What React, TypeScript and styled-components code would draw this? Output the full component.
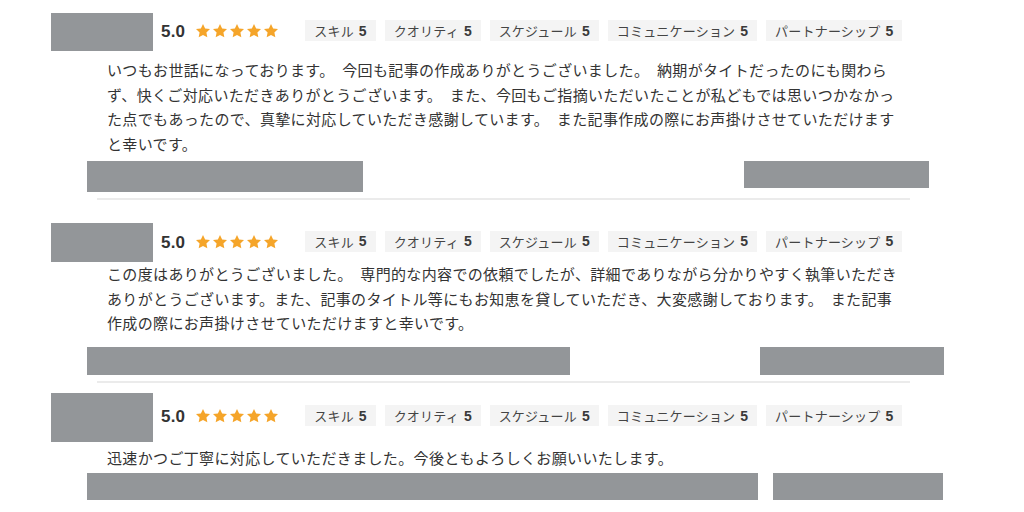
import React from 'react';
import styled, { createGlobalStyle } from 'styled-components';

const GlobalStyle = createGlobalStyle`
  html, body {
    margin: 0;
    padding: 0;
    background: #fff;
  }
  body {
    font-family: "Noto Sans CJK JP", "Noto Sans", sans-serif;
    color: #333;
  }
`;

const Page = styled.div`
  width: 1024px;
  height: 512px;
  overflow: hidden;
  padding-left: 51px;
  box-sizing: border-box;
`;

const Review = styled.section<{ $top: number }>`
  padding-top: ${({ $top }) => $top}px;
`;

const Header = styled.div`
  display: flex;
  align-items: center;
`;

const Avatar = styled.div<{ $h: number }>`
  width: 102px;
  height: ${({ $h }) => $h}px;
  background: #939699;
  flex-shrink: 0;
`;

const Score = styled.span`
  margin-left: 8px;
  font-family: "Liberation Sans", Arial, sans-serif;
  font-weight: 700;
  font-size: 17px;
  color: #333;
  letter-spacing: 0.2px;
`;

const Stars = styled.div`
  display: flex;
  gap: 1px;
  margin-left: 10px;
  margin-top: -2px;
`;

const Tags = styled.div`
  display: flex;
  gap: 9px;
  margin-left: 26px;
  margin-top: -3px;
`;

const Tag = styled.span`
  display: inline-flex;
  align-items: center;
  height: 21px;
  padding: 0 9px;
  background: #f4f4f4;
  font-size: 13px;
  letter-spacing: 0.2px;
  color: #444;
  white-space: nowrap;

  b {
    margin-left: 5px;
    font-family: "Liberation Sans", Arial, sans-serif;
    font-weight: 700;
    font-size: 14px;
    letter-spacing: 0;
    color: #3a3a3a;
  }
`;

const Body = styled.p<{ $top: number }>`
  margin: ${({ $top }) => $top}px 0 0 56px;
  font-size: 15px;
  line-height: 24.5px;
  color: #333;
  white-space: nowrap;
  letter-spacing: 0.35px;
  word-spacing: 4px;
`;

const Footer = styled.div<{ $top: number }>`
  display: flex;
  align-items: flex-start;
  margin: ${({ $top }) => $top}px 0 0 36px;
`;

const Redaction = styled.div<{ $w: number; $h: number; $gap?: number }>`
  width: ${({ $w }) => $w}px;
  height: ${({ $h }) => $h}px;
  margin-left: ${({ $gap }) => $gap ?? 0}px;
  background: #939699;
  flex-shrink: 0;
`;

const Divider = styled.hr<{ $top: number }>`
  width: 813px;
  margin: ${({ $top }) => $top}px 0 0 46px;
  border: 0;
  height: 2px;
  background: #ebebeb;
`;

const StarIcon = () => (
  <svg width="16" height="16" viewBox="0 0 24 24">
    <path
      d="M12 1.5l3.2 6.7 7.3.9-5.4 5.1 1.4 7.3L12 17.9l-6.5 3.6 1.4-7.3-5.4-5.1 7.3-.9z"
      fill="#f5a52a"
    />
  </svg>
);

const tags = ['スキル', 'クオリティ', 'スケジュール', 'コミュニケーション', 'パートナーシップ'];

type ReviewData = {
  top: number;
  avatarH: number;
  bodyTop: number;
  lines: string[];
  footerTop: number;
  left: { w: number; h: number };
  right: { w: number; h: number; gap: number };
  dividerTop?: number;
};

const reviews: ReviewData[] = [
  {
    top: 13,
    avatarH: 38,
    bodyTop: 7,
    lines: [
      'いつもお世話になっております。 今回も記事の作成ありがとうございました。 納期がタイトだったのにも関わら',
      'ず、快くご対応いただきありがとうございます。 また、今回もご指摘いただいたことが私どもでは思いつかなかっ',
      'た点でもあったので、真摯に対応していただき感謝しています。 また記事作成の際にお声掛けさせていただけます',
      'と幸いです。',
    ],
    footerTop: 5,
    left: { w: 276, h: 31 },
    right: { w: 185, h: 27, gap: 381 },
    dividerTop: 6,
  },
  {
    top: 23,
    avatarH: 39,
    bodyTop: 0,
    lines: [
      'この度はありがとうございました。 専門的な内容での依頼でしたが、詳細でありながら分かりやすく執筆いただき',
      'ありがとうございます。また、記事のタイトル等にもお知恵を貸していただき、大変感謝しております。 また記事',
      '作成の際にお声掛けさせていただけますと幸いです。',
    ],
    footerTop: 11,
    left: { w: 483, h: 28 },
    right: { w: 184, h: 28, gap: 190 },
    dividerTop: 6,
  },
  {
    top: 10,
    avatarH: 49,
    bodyTop: 4,
    lines: ['迅速かつご丁寧に対応していただきました。今後ともよろしくお願いいたします。'],
    footerTop: 3,
    left: { w: 671, h: 27 },
    right: { w: 170, h: 27, gap: 15 },
  },
];

function ReviewItem({ data }: { data: ReviewData }) {
  return (
    <Review $top={data.top}>
      <Header>
        <Avatar $h={data.avatarH} />
        <Score>5.0</Score>
        <Stars>
          {[0, 1, 2, 3, 4].map((i) => (
            <StarIcon key={i} />
          ))}
        </Stars>
        <Tags>
          {tags.map((t) => (
            <Tag key={t}>
              {t}
              <b>5</b>
            </Tag>
          ))}
        </Tags>
      </Header>
      <Body $top={data.bodyTop}>
        {data.lines.map((l, i) => (
          <React.Fragment key={i}>
            {l}
            {i < data.lines.length - 1 && <br />}
          </React.Fragment>
        ))}
      </Body>
      <Footer $top={data.footerTop}>
        <Redaction $w={data.left.w} $h={data.left.h} />
        <Redaction $w={data.right.w} $h={data.right.h} $gap={data.right.gap} />
      </Footer>
      {data.dividerTop !== undefined && <Divider $top={data.dividerTop} />}
    </Review>
  );
}

export default function App() {
  return (
    <>
      <GlobalStyle />
      <Page>
        {reviews.map((r, i) => (
          <ReviewItem key={i} data={r} />
        ))}
      </Page>
    </>
  );
}
